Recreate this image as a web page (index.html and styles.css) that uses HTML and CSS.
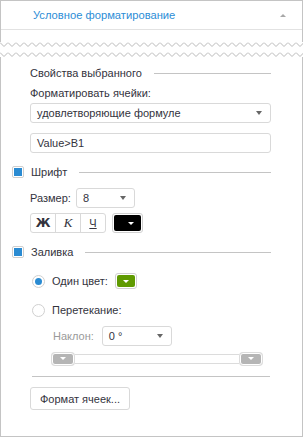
FILE: index.html
```html
<!DOCTYPE html>
<html lang="ru">
<head>
    <meta charset="UTF-8">
    <meta name="viewport" content="width=device-width, initial-scale=1.0">
    <title>Условное форматирование</title>
    <link rel="stylesheet" href="styles.css">
</head>
<body>
    <!-- Header panel -->
    <div class="panel-top">
        <div class="header">
            <span class="header__title">Условное форматирование</span>
            <span class="header__arrow"></span>
        </div>
    </div>

    <!-- Torn edges -->
    <svg class="tear" width="303" height="5">
        <defs>
            <pattern id="zig1" width="8" height="5" patternUnits="userSpaceOnUse">
                <polyline points="0,0.5 4,4.5 8,0.5" fill="none" stroke="#b9b9b9" stroke-width="1" />
            </pattern>
        </defs>
        <rect width="303" height="5" fill="url(#zig1)" />
    </svg>
    <svg class="tear tear--lower" width="303" height="5">
        <defs>
            <pattern id="zig2" width="8" height="5" patternUnits="userSpaceOnUse">
                <polyline points="0,0.5 4,4.5 8,0.5" fill="none" stroke="#b9b9b9" stroke-width="1" />
            </pattern>
        </defs>
        <rect width="303" height="5" fill="url(#zig2)" />
    </svg>

    <!-- Properties panel -->
    <div class="panel">
        <div class="section">
            <span>Свойства выбранного</span>
            <span class="section__line"></span>
        </div>

        <div class="label">Форматировать ячейки:</div>
        <div class="select select--wide">
            <span>удовлетворяющие формуле</span>
            <span class="select__arrow"></span>
        </div>
        <div class="input">Value&gt;B1</div>

        <!-- Font -->
        <div class="section section--check section--font">
            <span class="check"><span class="check__mark"></span></span>
            <span>Шрифт</span>
            <span class="section__line"></span>
        </div>

        <div class="row row--size">
            <span class="row__label">Размер:</span>
            <div class="select select--size">
                <span>8</span>
                <span class="select__arrow"></span>
            </div>
        </div>

        <div class="row row--style">
            <div class="btn-group">
                <span class="btn-style btn-style--bold">Ж</span>
                <span class="btn-style btn-style--italic">К</span>
                <span class="btn-style btn-style--under">Ч</span>
            </div>
            <div class="swatch swatch--black">
                <span class="swatch__fill"><span class="swatch__arrow"></span></span>
            </div>
        </div>

        <!-- Fill -->
        <div class="section section--check section--fill">
            <span class="check"><span class="check__mark"></span></span>
            <span>Заливка</span>
            <span class="section__line"></span>
        </div>

        <div class="radio-row radio-row--first">
            <span class="radio radio--on"></span>
            <span>Один цвет:</span>
            <div class="swatch swatch--green">
                <span class="swatch__fill"><span class="swatch__arrow"></span></span>
            </div>
        </div>

        <div class="radio-row radio-row--second">
            <span class="radio"></span>
            <span>Перетекание:</span>
        </div>

        <div class="row row--angle">
            <span class="row__label row__label--muted">Наклон:</span>
            <div class="select select--angle">
                <span>0 °</span>
                <span class="select__arrow"></span>
            </div>
        </div>

        <div class="slider">
            <span class="slider__handle"><span class="slider__arrow"></span></span>
            <span class="slider__track"></span>
            <span class="slider__handle"><span class="slider__arrow"></span></span>
        </div>

        <div class="divider"></div>

        <button class="btn" type="button">Формат ячеек...</button>
    </div>
</body>
</html>
```

FILE: styles.css
```css
:root {
	/* COLORS */
	--text: #33333d;
	--blue: #2c8dd6;
	--border: #c4c4c4;
	--field-border: #d9d9d9;
	--green: #5f9a00;

	font-size: 11px;
	font-family: "Liberation Sans", Arial, sans-serif;
}

* {
	box-sizing: border-box;
}

body {
	background: #fff;
	color: var(--text);
	margin: 0;
	width: 303px;
}

/* Header */
.panel-top {
	border: 1px solid var(--border);
	border-bottom: none;
	height: 42px;
}

.header {
	align-items: center;
	border-bottom: 1px solid #e2e2e2;
	display: flex;
	height: 29px;
	padding: 0 16px 0 32px;
}

.header__title {
	color: var(--blue);
	font-size: 11.2px;
}

.header__arrow {
	border-bottom: 3px solid #a8a8a8;
	border-left: 3px solid transparent;
	border-right: 3px solid transparent;
	height: 0;
	margin-left: auto;
	width: 0;
}

.tear {
	display: block;
}

.tear--lower {
	margin-top: 5px;
}

/* Panel */
.panel {
	border: 1px solid var(--border);
	border-top: none;
	height: 380px;
	padding: 8px 31px 0 29px;
}

.section {
	align-items: center;
	display: flex;
	height: 16px;
}

.section__line {
	background: #c4c4c4;
	flex: 1;
	height: 1px;
	margin-left: 12px;
}

.section--check {
	margin-left: -18px;
}

.section--check .check {
	margin-right: 7px;
}

.section--font {
	margin-top: 11px;
}

.section--fill {
	margin-top: 11px;
}

.label {
	height: 16px;
	line-height: 16px;
	margin-top: 4px;
}

.select,
.input {
	align-items: center;
	background: #fff;
	border: 1px solid var(--field-border);
	border-radius: 3px;
	display: flex;
	height: 20px;
	padding: 0 8px 0 6px;
}

.select--wide {
	margin-top: 2px;
}

.input {
	margin-top: 10px;
}

.select__arrow {
	border-left: 3px solid transparent;
	border-right: 3px solid transparent;
	border-top: 4px solid #666;
	height: 0;
	margin-left: auto;
	width: 0;
}

/* Checkbox / radio */
.check {
	background: #fff;
	border: 1px solid #cfcfcf;
	border-radius: 2px;
	display: inline-block;
	height: 12px;
	padding: 1px;
	width: 12px;
}

.check__mark {
	background: #2a8bd2;
	display: block;
	height: 8px;
	width: 8px;
}

.radio {
	border: 1px solid #d0d0d0;
	border-radius: 50%;
	display: inline-block;
	height: 13px;
	margin-right: 7px;
	position: relative;
	width: 13px;
}

.radio--on::after {
	background: #2a8bd2;
	border-radius: 50%;
	content: "";
	height: 7px;
	left: 2px;
	position: absolute;
	top: 2px;
	width: 7px;
}

/* Rows */
.row {
	align-items: center;
	display: flex;
}

.row__label {
	margin-right: 5px;
}

.row__label--muted {
	color: #9a9a9a;
	margin-right: 8px;
}

.row--size {
	margin-top: 8px;
}

.select--size {
	width: 59px;
}

.row--style {
	margin-top: 5px;
}

.btn-group {
	display: flex;
	height: 20px;
}

.btn-style {
	align-items: center;
	border: 1px solid var(--field-border);
	display: flex;
	justify-content: center;
	margin-left: -1px;
	width: 26px;
}

.btn-style:first-child {
	border-radius: 3px 0 0 3px;
	margin-left: 0;
}

.btn-style:last-child {
	border-radius: 0 3px 3px 0;
}

.btn-style--bold {
	font-family: "DejaVu Sans", sans-serif;
	font-size: 12px;
	font-weight: bold;
}

.btn-style--italic {
	font-family: "Liberation Serif", serif;
	font-size: 13px;
	font-style: italic;
}

.btn-style--under {
	font-size: 11px;
	text-decoration: underline;
}

.swatch {
	border: 1px solid #d0d0d0;
	border-radius: 3px;
	display: flex;
	padding: 1px;
}

.swatch__fill {
	align-items: center;
	border-radius: 2px;
	display: flex;
	height: 100%;
	width: 100%;
}

.swatch__arrow {
	border-left: 3px solid transparent;
	border-right: 3px solid transparent;
	border-top: 3px solid #fff;
	height: 0;
	width: 0;
}

.swatch--black {
	height: 20px;
	margin-left: 6px;
	width: 31px;
}

.swatch--black .swatch__fill {
	background: #000;
	justify-content: flex-end;
	padding-right: 7px;
}

.swatch--green {
	height: 16px;
	margin-left: 7px;
	width: 22px;
}

.swatch--green .swatch__fill {
	background: var(--green);
	justify-content: center;
}

.radio-row {
	align-items: center;
	display: flex;
	height: 20px;
	margin-left: 2px;
}

.radio-row--first {
	margin-top: 11px;
}

.radio-row--second {
	margin-top: 9px;
}

.row--angle {
	margin-top: 6px;
	padding-left: 23px;
}

.select--angle {
	width: 70px;
}

/* Slider */
.slider {
	align-items: center;
	display: flex;
	height: 13px;
	margin: 6px 9px 0 22px;
}

.slider__handle {
	align-items: center;
	background: #b5b5b5;
	border: 1px solid #fff;
	border-radius: 3px;
	box-shadow: 0 0 0 1px #dcdcdc;
	display: flex;
	height: 12px;
	justify-content: center;
	width: 22px;
}

.slider__arrow {
	border-left: 3px solid transparent;
	border-right: 3px solid transparent;
	border-top: 3px solid #fff;
	height: 0;
	width: 0;
}

.slider__track {
	border-bottom: 1px solid #dcdcdc;
	border-top: 1px solid #dcdcdc;
	flex: 1;
	height: 10px;
	margin: 0 1px;
}

.divider {
	background: #c4c4c4;
	height: 1px;
	margin: 11px 1px 0 2px;
}

.btn {
	background: #fff;
	border: 1px solid var(--field-border);
	border-radius: 3px;
	color: var(--text);
	font-family: inherit;
	font-size: 11px;
	height: 23px;
	margin-top: 10px;
	padding: 0;
	width: 100px;
}
```
